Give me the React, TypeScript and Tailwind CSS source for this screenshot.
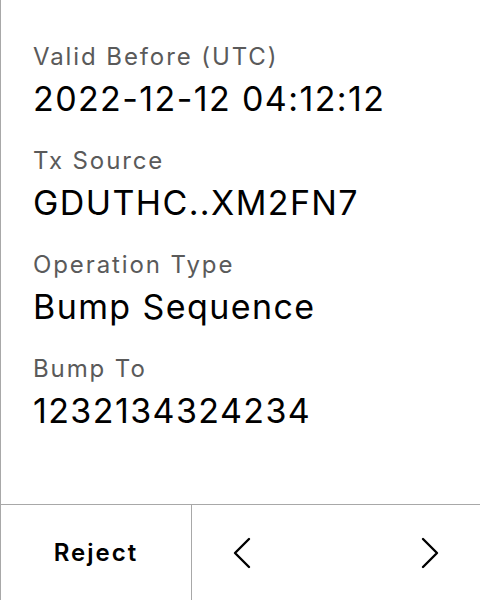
import React from "react";

const items = [
  { label: "Valid Before (UTC)", value: "2022-12-12 04:12:12" },
  { label: "Tx Source", value: "GDUTHC..XM2FN7" },
  { label: "Operation Type", value: "Bump Sequence" },
  { label: "Bump To", value: "1232134324234" },
];

function Chevron({ dir }: { dir: "left" | "right" }) {
  return (
    <svg width="20" height="32" viewBox="0 0 20 32" fill="none">
      <polyline
        points={dir === "left" ? "17,2 3,16 17,30" : "3,2 17,16 3,30"}
        stroke="#000"
        strokeWidth="2.4"
        strokeLinecap="round"
        strokeLinejoin="round"
      />
    </svg>
  );
}

export default function App() {
  return (
    <div
      className="w-[480px] h-[600px] bg-white flex flex-col border-l border-[#a8a8a8]"
      style={{ fontFamily: "Inter, 'Noto Sans', sans-serif" }}
    >
      <div className="flex-1 flex flex-col pl-[32px] pt-[41px] gap-[26px]">
        {items.map((it) => (
          <div key={it.label} className="flex flex-col gap-[6px]">
            <div className="text-[24px] leading-[32px] tracking-[1.9px] text-[#5a5a5a]">{it.label}</div>
            <div className="text-[34px] leading-[40px] tracking-[1.4px] text-black">{it.value}</div>
          </div>
        ))}
      </div>
      <div className="h-[96px] border-t border-[#a8a8a8] flex">
        <div className="w-[191px] border-r border-[#a8a8a8] flex items-center justify-center text-[24px] tracking-[2px] font-semibold text-black">
          Reject
        </div>
        <div className="flex-1 flex items-center justify-between px-[40px]">
          <Chevron dir="left" />
          <Chevron dir="right" />
        </div>
      </div>
    </div>
  );
}
